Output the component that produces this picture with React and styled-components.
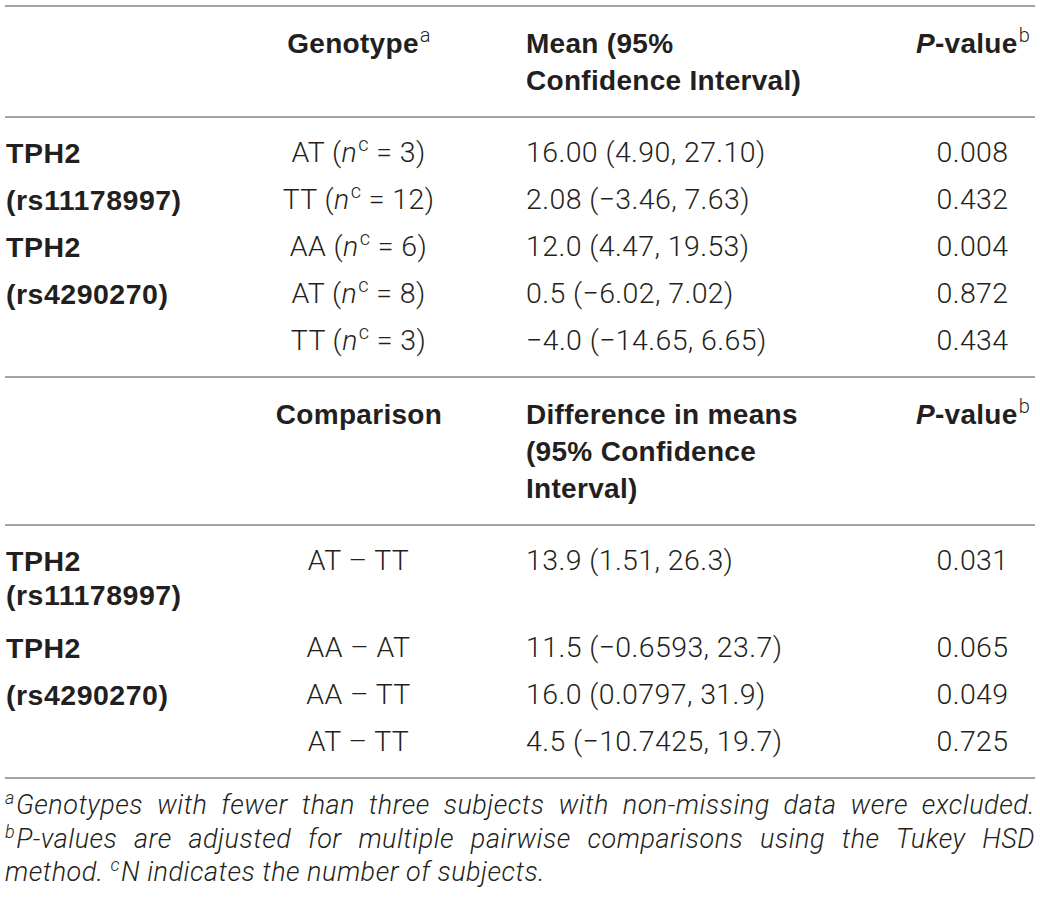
import React from "react";
import styled, { createGlobalStyle } from "styled-components";

const Global = createGlobalStyle`
  html, body { margin: 0; padding: 0; background: #ffffff; }
  body { color: #231f20; font-family: "Roboto", "Liberation Sans", sans-serif; }
`;

const Page = styled.div`
  width: 1030px;
  padding: 5px 5px 0 5px;
`;

const Table = styled.table`
  width: 1030px;
  border-collapse: collapse;
  table-layout: fixed;
  border-top: 2px solid #a3a3a3;
`;

const Group = styled.tbody`
  border-bottom: 2px solid #a3a3a3;
`;

const HeadCell = styled.th`
  padding: 18px 0 17px ${(p) => p.$padLeft || 0}px;
  font-family: "Liberation Sans", Arial, sans-serif;
  font-weight: 700;
  font-size: 28px;
  letter-spacing: 0.3px;
  line-height: 37px;
  text-align: ${(p) => p.$align || "left"};
  vertical-align: top;
  color: #231f20;
`;

const Cell = styled.td`
  padding-top: ${(p) => (p.$first ? 18 : 6.5)}px;
  padding-bottom: ${(p) => (p.$last ? 18 : p.$extra ? 12.5 : 6.5)}px;
  padding-left: ${(p) => p.$padLeft || 0}px;
  font-family: ${(p) =>
    p.$bold ? `"Liberation Sans", Arial, sans-serif` : `"Roboto", "Liberation Sans", sans-serif`};
  font-weight: ${(p) => (p.$bold ? 700 : 300)};
  font-size: 28.5px;
  letter-spacing: ${(p) => (p.$bold ? 0.5 : 0.4)}px;
  line-height: 34px;
  text-align: ${(p) => p.$align || "left"};
  vertical-align: top;
  white-space: nowrap;
`;

const Sup = styled.sup`
  font-family: "Roboto", "Liberation Sans", sans-serif;
  font-weight: 300;
  font-size: 20px;
  line-height: 0;
  vertical-align: 0.55em;
  margin-left: 1px;
`;

const Ital = styled.i`
  font-style: italic;
`;

const Notes = styled.div`
  padding-top: 10px;
  font-family: "Roboto", "Liberation Sans", sans-serif;
  font-style: italic;
  font-weight: 300;
  font-size: 27px;
  letter-spacing: 0.5px;
  line-height: 33.5px;
  color: #231f20;
`;

const Note = styled.p`
  margin: 0;
  text-align: justify;
  text-align-last: ${(p) => (p.$fill ? "justify" : "left")};
`;

const NoteSup = styled.sup`
  font-size: 18px;
  line-height: 0;
  vertical-align: 0.55em;
  margin-right: 1px;
`;

const M = "\u2212";

const section1 = [
  { gene: "TPH2", geno: "AT", n: 3, mean: "16.00 (4.90, 27.10)", p: "0.008" },
  { gene: "(rs11178997)", geno: "TT", n: 12, mean: `2.08 (${M}3.46, 7.63)`, p: "0.432" },
  { gene: "TPH2", geno: "AA", n: 6, mean: "12.0 (4.47, 19.53)", p: "0.004" },
  { gene: "(rs4290270)", geno: "AT", n: 8, mean: `0.5 (${M}6.02, 7.02)`, p: "0.872" },
  { gene: "", geno: "TT", n: 3, mean: `${M}4.0 (${M}14.65, 6.65)`, p: "0.434" },
];

const section2 = [
  { gene: ["TPH2", "(rs11178997)"], comp: "AT \u2013 TT", diff: "13.9 (1.51, 26.3)", p: "0.031" },
  { gene: ["TPH2"], comp: "AA \u2013 AT", diff: `11.5 (${M}0.6593, 23.7)`, p: "0.065" },
  { gene: ["(rs4290270)"], comp: "AA \u2013 TT", diff: "16.0 (0.0797, 31.9)", p: "0.049" },
  { gene: [""], comp: "AT \u2013 TT", diff: `4.5 (${M}10.7425, 19.7)`, p: "0.725" },
];

function PHead() {
  return (
    <HeadCell $align="center">
      <Ital>P</Ital>-value<Sup>b</Sup>
    </HeadCell>
  );
}

export default function App() {
  return (
    <Page>
      <Global />
      <Table>
        <colgroup>
          <col style={{ width: 255 }} />
          <col style={{ width: 198 }} />
          <col style={{ width: 453 }} />
          <col style={{ width: 124 }} />
        </colgroup>
        <Group>
          <tr>
            <HeadCell />
            <HeadCell $align="center">
              Genotype<Sup>a</Sup>
            </HeadCell>
            <HeadCell $padLeft={68}>
              Mean (95%
              <br />
              Confidence Interval)
            </HeadCell>
            <PHead />
          </tr>
        </Group>
        <Group>
          {section1.map((r, i) => {
            const first = i === 0;
            const last = i === section1.length - 1;
            return (
              <tr key={i}>
                <Cell $bold $padLeft={1} $first={first} $last={last}>
                  {r.gene}
                </Cell>
                <Cell $align="center" $first={first} $last={last}>
                  {r.geno} (<Ital>n</Ital>
                  <Sup>c</Sup> = {r.n})
                </Cell>
                <Cell $padLeft={68} $first={first} $last={last}>
                  {r.mean}
                </Cell>
                <Cell $align="center" $first={first} $last={last}>
                  {r.p}
                </Cell>
              </tr>
            );
          })}
        </Group>
        <Group>
          <tr>
            <HeadCell />
            <HeadCell $align="center">Comparison</HeadCell>
            <HeadCell $padLeft={68}>
              Difference in means
              <br />
              (95% Confidence
              <br />
              Interval)
            </HeadCell>
            <PHead />
          </tr>
        </Group>
        <Group>
          {section2.map((r, i) => {
            const first = i === 0;
            const last = i === section2.length - 1;
            return (
              <tr key={i}>
                <Cell $bold $padLeft={1} $first={first} $last={last} $extra={first}>
                  {r.gene.map((g, j) => (
                    <React.Fragment key={j}>
                      {j > 0 && <br />}
                      {g}
                    </React.Fragment>
                  ))}
                </Cell>
                <Cell $align="center" $first={first} $last={last} $extra={first}>
                  {r.comp}
                </Cell>
                <Cell $padLeft={68} $first={first} $last={last} $extra={first}>
                  {r.diff}
                </Cell>
                <Cell $align="center" $first={first} $last={last} $extra={first}>
                  {r.p}
                </Cell>
              </tr>
            );
          })}
        </Group>
      </Table>
      <Notes>
        <Note $fill>
          <NoteSup>a</NoteSup>Genotypes with fewer than three subjects with non-missing data were excluded.
        </Note>
        <Note>
          <NoteSup>b</NoteSup>P-values are adjusted for multiple pairwise comparisons using the Tukey HSD
          method. <NoteSup>c</NoteSup>N indicates the number of subjects.
        </Note>
      </Notes>
    </Page>
  );
}
